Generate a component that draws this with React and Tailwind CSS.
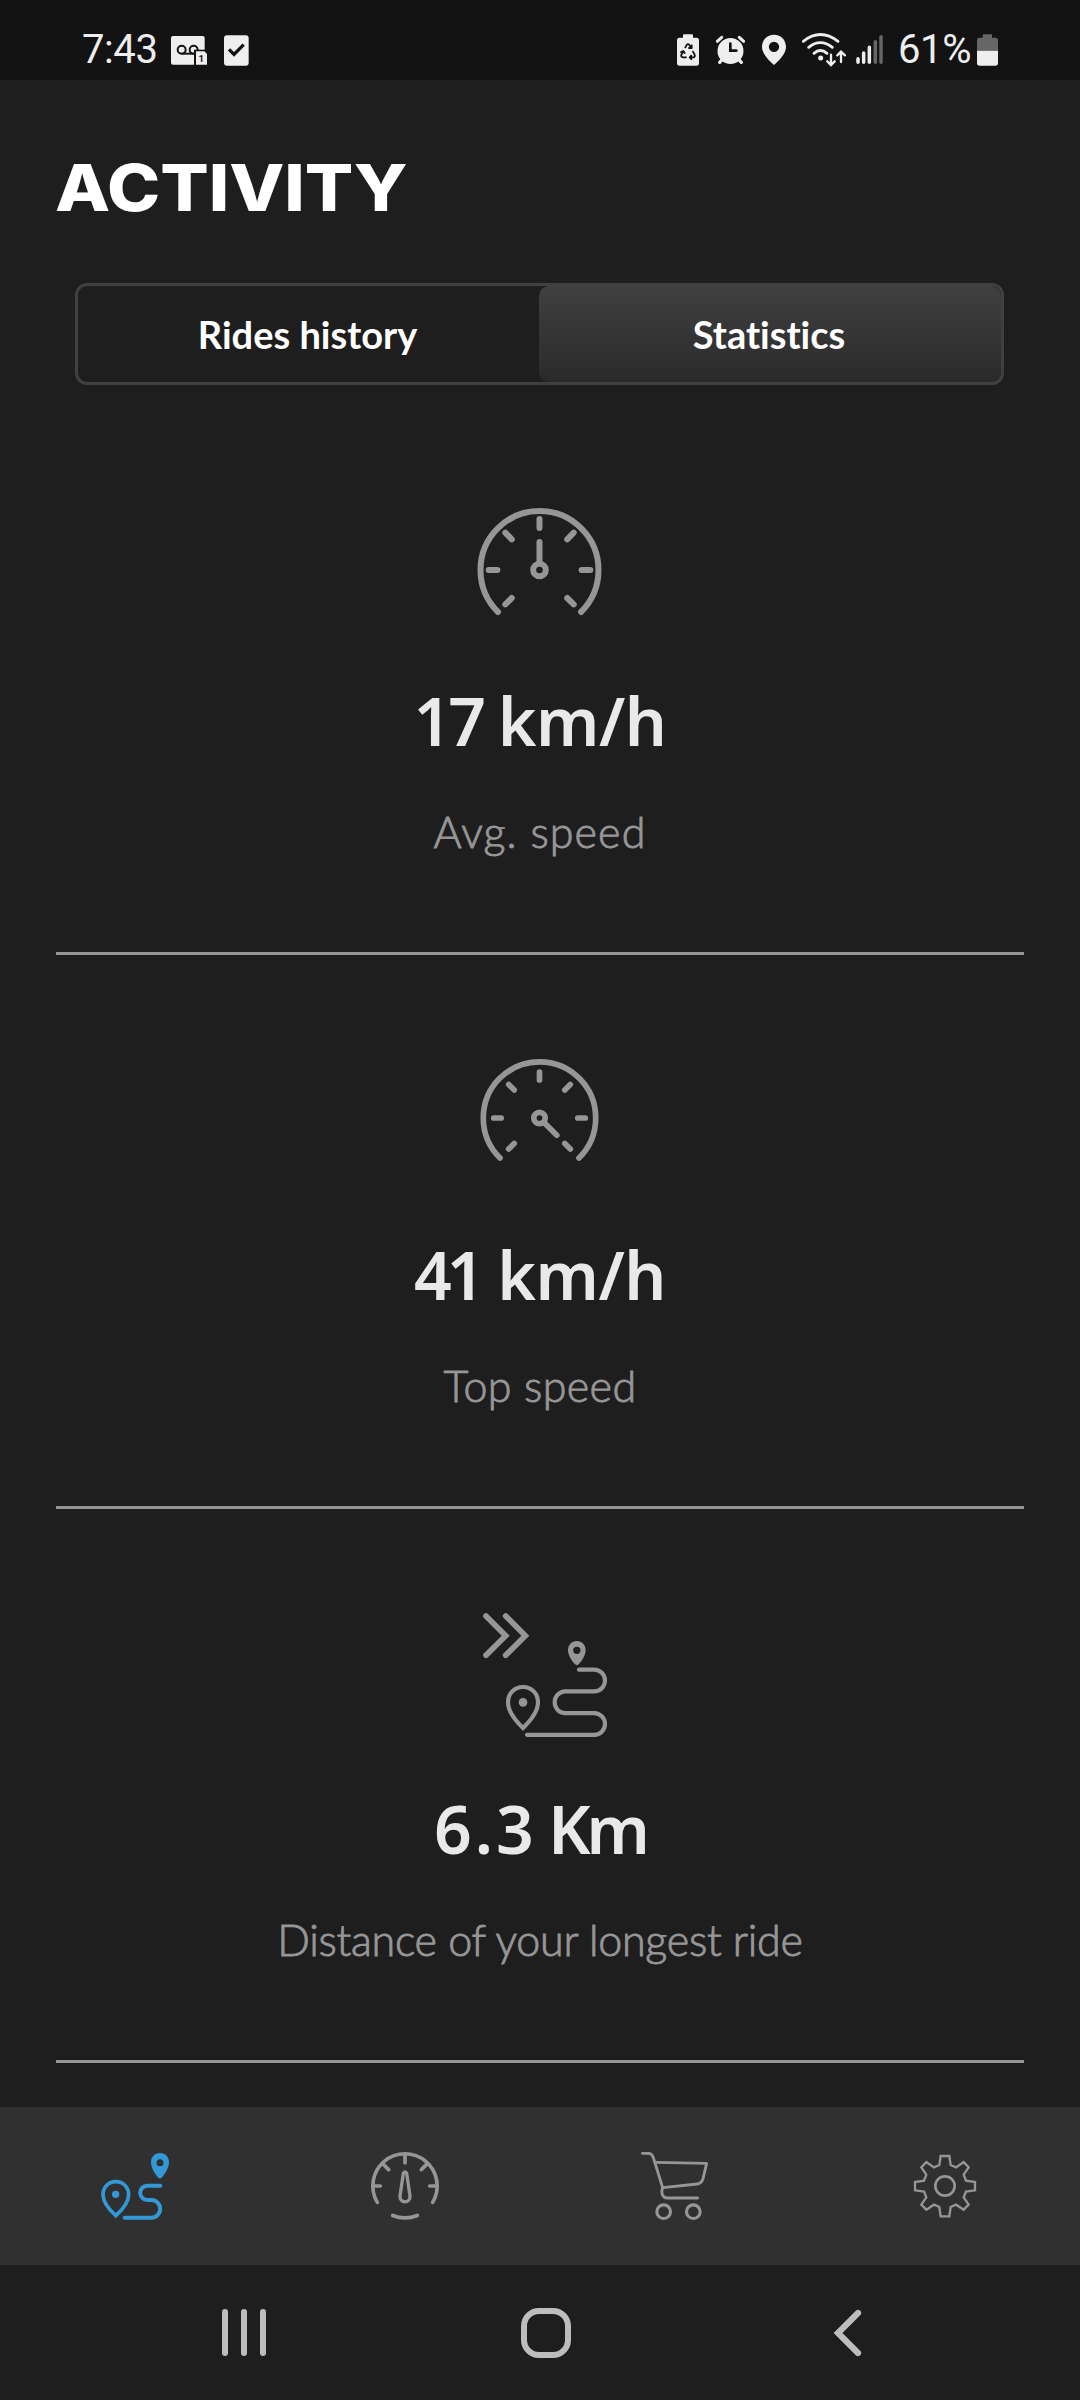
import React, { useState } from 'react';

const GaugeAvgIcon = () => (
  <svg width="130" height="130" viewBox="475 502 130 130" fill="none" stroke="currentColor" strokeWidth="6" strokeLinecap="round">
    <path d="M498 612A59 59 0 1 1 581 612" />
    <path d="M539.5 519V528M488.7 570H497.4M581.6 570H590.3" />
    <path d="M505.3 532.6L511.8 539.4M573.7 532.6L567.2 539.4M505.3 604.4L511.8 598M573.7 604.4L567.2 598" />
    <path d="M539.5 542V562" />
    <circle cx="539.5" cy="570" r="6.3" />
  </svg>
);

const GaugeTopIcon = () => (
  <svg width="130" height="130" viewBox="475 1056 130 130" fill="none" stroke="currentColor" strokeWidth="5.7" strokeLinecap="round">
    <path d="M500 1158A56.2 56.2 0 1 1 579 1158" />
    <path d="M539.5 1072V1080M493.7 1118H501.2M577.8 1118H585.3" />
    <path d="M508.7 1084.5L514.2 1090M570.3 1084.5L564.8 1090M508.7 1149L514.2 1143.5M570.3 1149L564.8 1143.5" />
    <path d="M543.5 1122L556.8 1135.3" />
    <circle cx="539.5" cy="1118" r="5.7" />
  </svg>
);

const LongRouteIcon = () => (
  <svg width="130" height="130" viewBox="225 60 390 390" className="overflow-visible" fill="none" stroke="currentColor" strokeWidth="12.5" strokeLinecap="round">
    <path strokeWidth="17" d="M258 78L317 137L258 196M317 78L376 137L317 196" />
    <path d="M537 239H582.500A32.500 32.500 0 0 1 582.500 304H493A33 33 0 0 0 493 369.500H582.500A32.500 32.500 0 0 1 582.500 434.500H381" />
    <path d="M369 291C343 291 324 311 324 337C324 363 344 390 369 414C394 390 414 363 414 337C414 311 395 291 369 291Z" />
    <circle cx="369" cy="337" r="13" fill="currentColor" stroke="none" />
    <path fill="currentColor" stroke="none" fillRule="evenodd" d="M530.5 153C515 153 504 165 504 180C504 196 516 213 525 223Q530.5 228 536 223C545 213 557 196 557 180C557 165 546 153 530.5 153ZM530.5 170A11 11 0 1 1 530.5 192A11 11 0 1 1 530.5 170Z" />
  </svg>
);

const RouteIcon = () => (
  <svg width="80" height="80" viewBox="45 138 240 240" fill="none" stroke="currentColor" strokeWidth="12" strokeLinecap="round">
    <path d="M241 257H202A21 21 0 0 0 202 300H214A26 26 0 0 1 214 353H134" />
    <path strokeWidth="11" d="M107.500 245C85 245 69 262 69 284C69 306 88 329 107.500 347C127 329 146 306 146 284C146 262 130 245 107.500 245Z" />
    <circle cx="107" cy="283" r="11" fill="currentColor" stroke="none" />
    <path fill="currentColor" stroke="none" fillRule="evenodd" d="M240 159C224 159 213 171 213 186C213 203 225 223 235 233Q240 237 245 233C255 223 267 203 267 186C267 171 256 159 240 159ZM240 177.500A10.500 10.500 0 1 1 240 198.500A10.500 10.500 0 1 1 240 177.500Z" />
  </svg>
);

const DashboardIcon = () => (
  <svg width="80" height="80" viewBox="855 138 240 240" fill="none" stroke="currentColor" strokeWidth="11" strokeLinecap="round">
    <path d="M892 307A96.500 96.500 0 1 1 1058 307" />
    <path d="M975 163V189M880 258H901M1070 258H1049M907 190L926 209M1043 190L1024 209" />
    <path strokeWidth="10" d="M970 220Q975 212 980 220L990 288C992 311 958 311 960 288Z" />
    <path d="M938 346.500Q975 361 1012 346.500" />
  </svg>
);

const CartIcon = () => (
  <svg width="80" height="80" viewBox="105 138 240 240" fill="none" stroke="currentColor" strokeWidth="8.5" strokeLinecap="round" strokeLinejoin="round">
    <path d="M127 160H145Q155 160 159 170L188 263" />
    <path d="M166 187L320 190L309 236Q305 251 291 252L189 263Q184 268 186 280Q189 294 203 294H293" />
    <circle cx="191" cy="335" r="20.5" strokeWidth="9.5" />
    <circle cx="280" cy="335" r="20.5" strokeWidth="9.5" />
  </svg>
);

const GearIcon = () => (
  <svg width="80" height="80" viewBox="915 138 240 240" fill="none" stroke="currentColor" strokeWidth="7">
    <path d="M1022 168H1048L1052 195L1068 202L1091 186L1106 202L1091 224L1098 242L1125 246V271L1098 275L1091 292L1106 314L1091 329L1068 314L1052 321L1048 349H1022L1018 321L1002 314L979 329L964 314L979 292L972 275L945 271V246L972 242L979 224L964 202L979 186L1002 202L1018 195Z" />
    <circle cx="1035" cy="258" r="29" strokeWidth="8" />
  </svg>
);

const stats = [
  { icon: GaugeAvgIcon, value: '17', unit: 'km/h', valueClass: 'tracking-[-3px]', unitClass: 'tracking-[-0.5px] [word-spacing:-2px]', label: 'Avg. speed', labelClass: 'tracking-[1.1px]' },
  { icon: GaugeTopIcon, value: '41', unit: 'km/h', valueClass: 'tracking-[-5px]', unitClass: 'tracking-[-0.5px] [word-spacing:1px]', label: 'Top speed', labelClass: 'tracking-[0.4px]' },
  { icon: LongRouteIcon, value: '6.3', unit: 'Km', valueClass: 'tracking-[3px]', unitClass: 'tracking-[-4px] [word-spacing:-2px]', label: 'Distance of your longest ride', labelClass: 'tracking-[-0.25px]' },
];

const navItems = [
  { id: 'activity', icon: RouteIcon },
  { id: 'dashboard', icon: DashboardIcon },
  { id: 'shop', icon: CartIcon },
  { id: 'settings', icon: GearIcon },
];

const StatusBar = () => (
  <div className="h-20 pt-5 pl-[82px] pr-[82px] flex justify-between bg-[#131313] text-[#eeeeee] font-['Roboto',sans-serif] text-[40px] leading-[60px] tracking-[-0.4px]">
    <div className="flex items-center">
      <span className="w-[89px]">7:43</span>
      {/* Voicemail */}
      <svg width="36" height="60" viewBox="333 15 108 180">
        <rect x="333" y="63" width="101" height="86" rx="6" fill="currentColor" />
        <g fill="none" stroke="#131313" strokeWidth="6">
          <circle cx="365" cy="104" r="12" />
          <circle cx="401" cy="104" r="12" />
          <path d="M365 116H401" />
        </g>
        <path d="M402 150V104H441V150Z" fill="#131313" />
        <path d="M408 149V109H433L441 117V149Z" fill="currentColor" />
        <text x="424" y="141" fontSize="29" fontWeight="700" textAnchor="middle" fill="#131313">1</text>
      </svg>
      <svg className="ml-[17px]" width="25" height="60" viewBox="492 15 75 180">
        <rect x="492" y="61" width="74" height="91" rx="9" fill="currentColor" />
        <path d="M507 103L522 118L551 89" fill="none" stroke="#131313" strokeWidth="10" />
      </svg>
    </div>
    <div className="flex items-center">
      {/* Power saving battery */}
      <svg width="22" height="60" viewBox="51 15 66 180">
        <path d="M69 68V61Q69 58 72 58H96Q99 58 99 61V68H109Q117 68 117 76V144Q117 152 109 152H59Q51 152 51 144V76Q51 68 59 68Z" fill="currentColor" />
        <g fill="none" stroke="#131313" strokeWidth="5.5" strokeLinecap="round" strokeLinejoin="round">
          <path d="M76 97L80 90Q84 85 88 90L94 99M95 91V99H87" />
          <path d="M99 110L104 119Q106 127 99 127H90M94 122L89 127L94 132" />
          <path d="M78 127H69Q62 126 64 119L70 109M63 111L70 108L74 114" />
        </g>
      </svg>
      <svg className="ml-[17px]" width="29" height="60" viewBox="168 15 87 180">
        <circle cx="211.500" cy="108" r="39" fill="currentColor" />
        <path d="M172 79L185 67M251 79L238 67" stroke="currentColor" strokeWidth="9" strokeLinecap="round" />
        <path d="M179 142L188 132M244 142L235 132" stroke="currentColor" strokeWidth="10" strokeLinecap="round" />
        <path d="M211 86V107H229" fill="none" stroke="#131313" strokeWidth="8" strokeLinecap="round" />
      </svg>
      <svg className="ml-[17px]" width="24" height="60" viewBox="306 15 72 180">
        <path fill="currentColor" fillRule="evenodd" d="M342 59C321 59 306 75 306 96C306 116 327 137 342 150C357 137 378 116 378 96C378 75 363 59 342 59ZM342 80A15.500 15.500 0 1 1 342 111A15.500 15.500 0 1 1 342 80Z" />
      </svg>
      {/* Wifi with transfer arrows */}
      <svg className="ml-[15px]" width="46" height="60" viewBox="423 15 138 180" fill="none" stroke="currentColor" strokeWidth="8.5" strokeLinecap="round">
        <path d="M430 79Q481 38 534 79" />
        <path d="M446 97Q481 69 517 97" />
        <path d="M462 115Q481 98 501 115" />
        <circle cx="482" cy="129" r="7.5" fill="currentColor" stroke="none" />
        <path strokeWidth="7" d="M513 119V148M502 139L513 150L524 139M543 141V112M532 121L543 110L555 121" />
      </svg>
      <svg className="ml-[9px]" width="27" height="60" viewBox="588 15 81 180" strokeWidth="10.5" strokeLinecap="round">
        <path stroke="currentColor" d="M594 131V142M611 114V142M628 97V142" />
        <path stroke="#666666" d="M646 80V142M663 65V142" />
      </svg>
      <span className="w-[79px] ml-[15px]">61%</span>
      <svg width="21" height="60" viewBox="951 15 63 180">
        <path d="M968 68V61Q968 58 971 58H993Q996 58 996 61V68H1006Q1014 68 1014 76V107H951V76Q951 68 959 68Z" fill="#666666" />
        <path d="M951 107H1014V144Q1014 152 1006 152H959Q951 152 951 144Z" fill="currentColor" />
      </svg>
    </div>
  </div>
);

const SystemNav = () => (
  <div className="h-[135px] flex items-center text-[#bdbdbd]">
    <div className="flex gap-[13px] ml-[222px]">
      <div className="w-1.5 h-[47px] rounded-full bg-current"></div>
      <div className="w-1.5 h-[47px] rounded-full bg-current"></div>
      <div className="w-1.5 h-[47px] rounded-full bg-current"></div>
    </div>
    <div className="w-[50px] h-[50px] ml-[255px] rounded-[18px] border-6 border-current"></div>
    <svg className="ml-[261px]" width="31" height="50" viewBox="0 0 31 50" fill="none" stroke="currentColor" strokeWidth="6.2" strokeLinecap="round">
      <path d="M26 5L6 25L26 45" />
    </svg>
  </div>
);

const App = () => {
  const [tab, setTab] = useState('statistics');

  const tabClass = (name) =>
    `pr-0.5 rounded-[10px] text-white ${tab === name ? 'bg-linear-to-b from-[#404040] to-[#2a2a2a]' : ''}`;

  return (
    <div className="w-[1080px] h-[2400px] flex flex-col overflow-hidden bg-[#1e1e1e] font-['Lato',sans-serif]">
      <StatusBar />

      {/* Header */}
      <h1 className="mt-[76px] ml-[55px] self-start origin-left scale-x-[1.12] font-['Inter',sans-serif] text-[64px] leading-[64px] font-extrabold text-white">ACTIVITY</h1>

      <div className="mt-[63px] mx-[75px] w-[929px] h-[102px] grid grid-cols-[461px_462px] border-3 border-[#404040] rounded-xl text-[38px] font-bold [font-variant-ligatures:none]">
        <button className={tabClass('rides')} onClick={() => setTab('rides')}>Rides history</button>
        <button className={tabClass('statistics')} onClick={() => setTab('statistics')}>Statistics</button>
      </div>

      {/* Statistics list */}
      <div className="flex-1 mt-4 px-14">
        {stats.map(({ icon: Icon, value, unit, valueClass, unitClass, label, labelClass }) => (
          <div key={label} className="h-[554px] pt-[101px] flex flex-col items-center border-b-3 border-[#969696] text-[#969696]">
            <Icon />
            <div className="mt-[52px] font-['Noto_Sans',sans-serif] text-[66px] leading-[72px] font-semibold text-[#e9e9e9]">
              <span className={valueClass}>{value}</span>
              <span className={unitClass}> {unit}</span>
            </div>
            <div className={`mt-12 text-[43px] leading-[56px] font-light [font-variant-ligatures:none] [-webkit-text-stroke:0.9px] ${labelClass}`}>{label}</div>
          </div>
        ))}
      </div>

      {/* Bottom navigation */}
      <div className="h-[158px] grid grid-cols-4 bg-[#303030]">
        {navItems.map(({ id, icon: Icon }) => (
          <button key={id} className={`flex items-center justify-center ${id === 'activity' ? 'text-[#3399d6]' : 'text-[#969696]'}`}>
            <Icon />
          </button>
        ))}
      </div>

      <SystemNav />
    </div>
  );
};

export default App;
